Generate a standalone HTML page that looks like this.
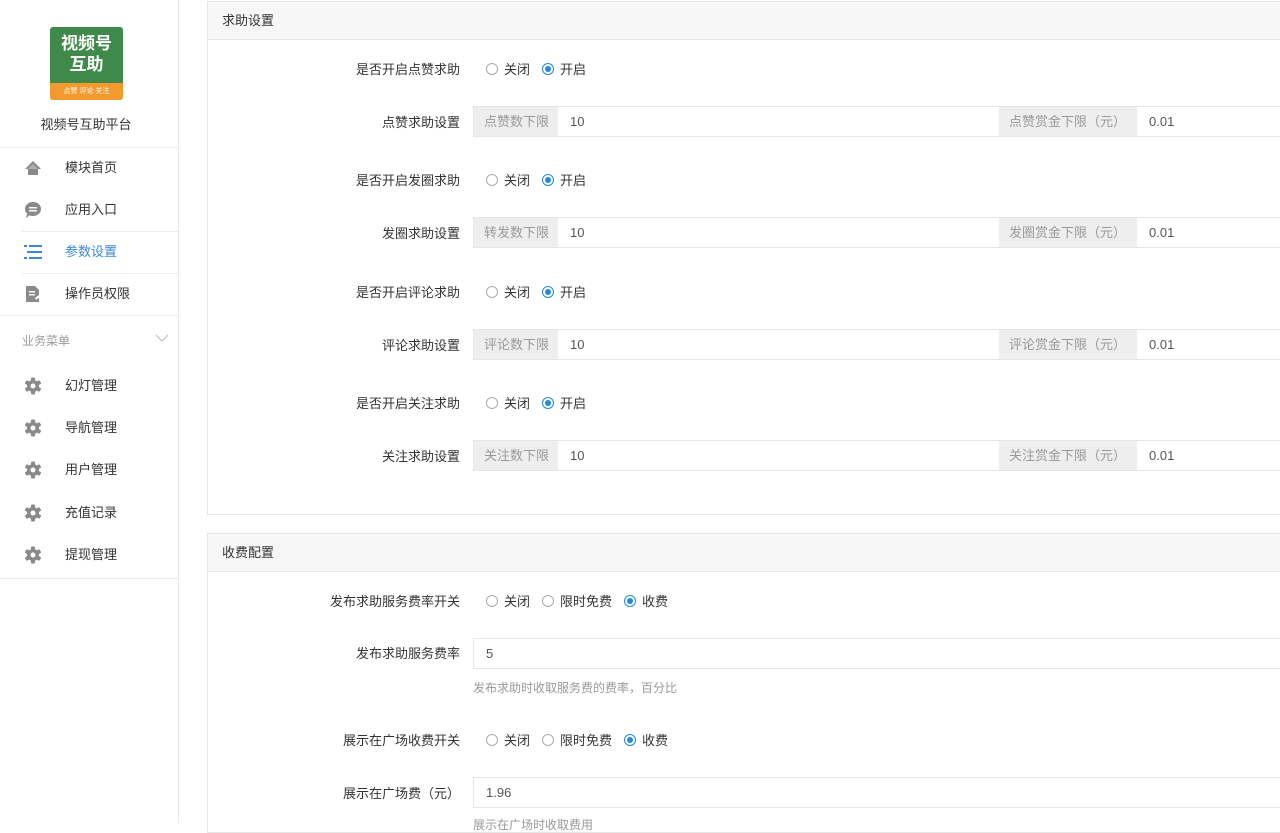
<!DOCTYPE html>
<html><head><meta charset="utf-8"><style>
*{box-sizing:border-box;margin:0;padding:0}
body{width:1280px;height:823px;overflow:hidden;background:#fff;font-family:"Liberation Sans","Noto Sans CJK SC",sans-serif;font-size:13px;color:#333;position:relative}
.side{position:absolute;left:0;top:0;width:179px;height:823px;border-right:1px solid #e8e8e8;background:#fff}
.logo{position:absolute;left:50px;top:27px;width:73px;height:73px;background:#3f8a4a;border-radius:3px;overflow:hidden;text-align:center;color:#fff;font-weight:bold;font-size:17px;line-height:21px;padding-top:6px}
.logo .b{position:absolute;left:0;bottom:0;width:100%;height:17px;background:#f39a2e;font-size:7px;font-weight:normal;line-height:17px}
.ttl{position:absolute;top:114px;width:172px;text-align:center;font-size:13px}
.hl{position:absolute;height:1px;background:#ececec}
.mi{position:absolute;left:65px;font-size:13px;color:#333;transform:translateY(-2px)}
.ic{position:absolute;left:24px;width:18px;height:18px}
.card{position:absolute;left:207px;width:1080px;border:1px solid #e6e6e6;background:#fff}
.ch{height:38px;background:#f7f7f7;border-bottom:1px solid #e6e6e6;padding-left:14px;line-height:38px;font-size:13px}
.lb{position:absolute;right:820px;font-size:13px;color:#333;text-align:right;white-space:nowrap;transform:translateY(-2px)}
.rd{position:absolute;left:486px;font-size:13px;white-space:nowrap;display:flex;align-items:center;transform:translateY(-2px)}
.r{display:inline-block;width:12px;height:12px;border:1px solid #aaa;border-radius:50%;margin-right:6px;position:relative}
.r.on{border-color:#1e88e5}
.r.on:after{content:"";position:absolute;left:2px;top:2px;width:6px;height:6px;border-radius:50%;background:#1e88e5}
.rd span.t{margin-right:12px}
.ig{position:absolute;left:473px;width:820px;height:31px;border:1px solid #e6e6e6;font-size:13px}
.ig div{position:absolute;top:0;height:29px;line-height:30px}
.pre{background:#eee;color:#999;padding-left:10px}
.val{color:#555;padding-left:12px}
.help{position:absolute;left:473px;color:#999;font-size:12px;transform:translateY(-1px)}
</style></head><body>
<div class="side">
<div class="logo">视频号<br>互助<div class="b">点赞 评论 关注</div></div>
<div class="ttl">视频号互助平台</div>
<div class="hl" style="left:0;top:147px;width:178px"></div>
<svg class="ic" style="top:159px" viewBox="0 0 18 18"><path d="M9 2L1 10h3v6h10v-6h3z" fill="#8a8a8a"/><path d="M4 10L9 5l5 5" fill="#b0b0b0"/></svg>
<div class="mi" style="top:159px">模块首页</div>
<svg class="ic" style="top:201px" viewBox="0 0 18 18"><ellipse cx="9" cy="8" rx="8" ry="7" fill="#8a8a8a"/><path d="M3 13l-1 4 4-3z" fill="#8a8a8a"/><rect x="5" y="6" width="8" height="1.5" fill="#fff"/><rect x="5" y="9" width="8" height="1.5" fill="#fff"/></svg>
<div class="mi" style="top:201px">应用入口</div>
<div class="hl" style="left:22px;top:231px;width:156px"></div>
<svg class="ic" style="top:243px" viewBox="0 0 18 18" fill="#3a86d8"><rect x="0" y="2" width="3" height="2"/><rect x="5" y="2" width="13" height="2"/><rect x="3" y="8" width="15" height="2"/><rect x="0" y="14" width="3" height="2"/><rect x="5" y="14" width="13" height="2"/></svg>
<div class="mi" style="top:243px;color:#3a86d8">参数设置</div>
<div class="hl" style="left:22px;top:273px;width:156px"></div>
<svg class="ic" style="top:285px" viewBox="0 0 18 18"><path d="M2 1h9l4 4v12H2z" fill="#8a8a8a"/><rect x="5" y="6" width="6" height="1.5" fill="#fff"/><rect x="5" y="9" width="6" height="1.5" fill="#fff"/><path d="M11 13l5-4 1 2-5 4z" fill="#fff"/></svg>
<div class="mi" style="top:285px">操作员权限</div>
<div class="hl" style="left:0;top:315px;width:178px"></div>
<div style="position:absolute;left:22px;top:332px;color:#999;font-size:12px">业务菜单</div>
<svg style="position:absolute;left:155px;top:334px" width="14" height="8" viewBox="0 0 14 8"><path d="M1 1l6 6 6-6" stroke="#bbb" fill="none"/></svg>
<div class="hl" style="left:0;top:578px;width:178px"></div>
</div>

<div class="card" style="top:1px;height:514px">
<div class="ch">求助设置</div>
</div>
<div class="card" style="top:533px;height:300px">
<div class="ch">收费配置</div>
</div>

<svg class="ic" style="top:377px;position:absolute" viewBox="0 0 18 18"><g fill="#8a8a8a"><circle cx="9" cy="9" r="6"/><rect x="7" y="0.5" width="4" height="17" rx="1"/><rect x="7" y="0.5" width="4" height="17" rx="1" transform="rotate(60 9 9)"/><rect x="7" y="0.5" width="4" height="17" rx="1" transform="rotate(120 9 9)"/></g><circle cx="9" cy="9" r="2.5" fill="#fff"/></svg>
<div class="mi" style="top:377px">幻灯管理</div>
<svg class="ic" style="top:419px;position:absolute" viewBox="0 0 18 18"><g fill="#8a8a8a"><circle cx="9" cy="9" r="6"/><rect x="7" y="0.5" width="4" height="17" rx="1"/><rect x="7" y="0.5" width="4" height="17" rx="1" transform="rotate(60 9 9)"/><rect x="7" y="0.5" width="4" height="17" rx="1" transform="rotate(120 9 9)"/></g><circle cx="9" cy="9" r="2.5" fill="#fff"/></svg>
<div class="mi" style="top:419px">导航管理</div>
<svg class="ic" style="top:461px;position:absolute" viewBox="0 0 18 18"><g fill="#8a8a8a"><circle cx="9" cy="9" r="6"/><rect x="7" y="0.5" width="4" height="17" rx="1"/><rect x="7" y="0.5" width="4" height="17" rx="1" transform="rotate(60 9 9)"/><rect x="7" y="0.5" width="4" height="17" rx="1" transform="rotate(120 9 9)"/></g><circle cx="9" cy="9" r="2.5" fill="#fff"/></svg>
<div class="mi" style="top:461px">用户管理</div>
<svg class="ic" style="top:504px;position:absolute" viewBox="0 0 18 18"><g fill="#8a8a8a"><circle cx="9" cy="9" r="6"/><rect x="7" y="0.5" width="4" height="17" rx="1"/><rect x="7" y="0.5" width="4" height="17" rx="1" transform="rotate(60 9 9)"/><rect x="7" y="0.5" width="4" height="17" rx="1" transform="rotate(120 9 9)"/></g><circle cx="9" cy="9" r="2.5" fill="#fff"/></svg>
<div class="mi" style="top:504px">充值记录</div>
<svg class="ic" style="top:546px;position:absolute" viewBox="0 0 18 18"><g fill="#8a8a8a"><circle cx="9" cy="9" r="6"/><rect x="7" y="0.5" width="4" height="17" rx="1"/><rect x="7" y="0.5" width="4" height="17" rx="1" transform="rotate(60 9 9)"/><rect x="7" y="0.5" width="4" height="17" rx="1" transform="rotate(120 9 9)"/></g><circle cx="9" cy="9" r="2.5" fill="#fff"/></svg>
<div class="mi" style="top:546px">提现管理</div>

<div class="lb" style="top:61px">是否开启点赞求助</div>
<div class="rd" style="top:61px"><i class="r"></i><span class="t">关闭</span><i class="r on"></i><span>开启</span></div>
<div class="lb" style="top:114px">点赞求助设置</div>
<div class="ig" style="top:106px"><div class="pre" style="left:0;width:84px">点赞数下限</div><div class="val" style="left:84px">10</div><div class="pre" style="left:525px;width:138px">点赞赏金下限（元）</div><div class="val" style="left:663px">0.01</div></div>

<div class="lb" style="top:172px">是否开启发圈求助</div>
<div class="rd" style="top:172px"><i class="r"></i><span class="t">关闭</span><i class="r on"></i><span>开启</span></div>
<div class="lb" style="top:225px">发圈求助设置</div>
<div class="ig" style="top:217px"><div class="pre" style="left:0;width:84px">转发数下限</div><div class="val" style="left:84px">10</div><div class="pre" style="left:525px;width:138px">发圈赏金下限（元）</div><div class="val" style="left:663px">0.01</div></div>

<div class="lb" style="top:284px">是否开启评论求助</div>
<div class="rd" style="top:284px"><i class="r"></i><span class="t">关闭</span><i class="r on"></i><span>开启</span></div>
<div class="lb" style="top:337px">评论求助设置</div>
<div class="ig" style="top:329px"><div class="pre" style="left:0;width:84px">评论数下限</div><div class="val" style="left:84px">10</div><div class="pre" style="left:525px;width:138px">评论赏金下限（元）</div><div class="val" style="left:663px">0.01</div></div>

<div class="lb" style="top:395px">是否开启关注求助</div>
<div class="rd" style="top:395px"><i class="r"></i><span class="t">关闭</span><i class="r on"></i><span>开启</span></div>
<div class="lb" style="top:448px">关注求助设置</div>
<div class="ig" style="top:440px"><div class="pre" style="left:0;width:84px">关注数下限</div><div class="val" style="left:84px">10</div><div class="pre" style="left:525px;width:138px">关注赏金下限（元）</div><div class="val" style="left:663px">0.01</div></div>

<div class="lb" style="top:593px">发布求助服务费率开关</div>
<div class="rd" style="top:593px"><i class="r"></i><span class="t">关闭</span><i class="r"></i><span class="t">限时免费</span><i class="r on"></i><span>收费</span></div>
<div class="lb" style="top:645px">发布求助服务费率</div>
<div class="ig" style="top:638px"><div class="val" style="left:0">5</div></div>
<div class="help" style="top:680px">发布求助时收取服务费的费率，百分比</div>
<div class="lb" style="top:732px">展示在广场收费开关</div>
<div class="rd" style="top:732px"><i class="r"></i><span class="t">关闭</span><i class="r"></i><span class="t">限时免费</span><i class="r on"></i><span>收费</span></div>
<div class="lb" style="top:785px">展示在广场费（元）</div>
<div class="ig" style="top:777px"><div class="val" style="left:0">1.96</div></div>
<div class="help" style="top:817px">展示在广场时收取费用</div>
</body></html>
